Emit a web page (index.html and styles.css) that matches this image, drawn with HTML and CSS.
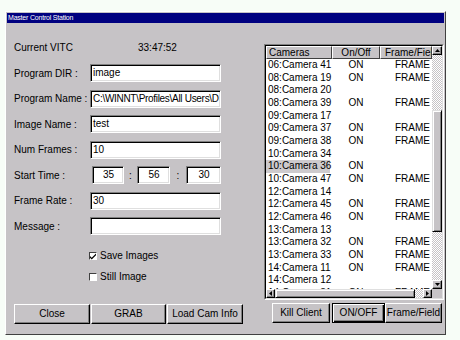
FILE: index.html
```html
<!DOCTYPE html>
<html>
<head>
<meta charset="utf-8">
<link rel="stylesheet" href="styles.css">
</head>
<body>
<div class="window">
  <div class="titlebar">Master Control Station</div>
  <div class="client">
    <div class="left">
      <div class="vitc"><span class="vitc-label">Current VITC</span><span>33:47:52</span></div>
      <div class="form">
        <span class="lbl">Program DIR :</span><div class="field">image</div>
        <span class="lbl">Program Name :</span><div class="field tight">C:\WINNT\Profiles\All Users\D</div>
        <span class="lbl">Image Name :</span><div class="field">test</div>
        <span class="lbl">Num Frames :</span><div class="field">10</div>
        <span class="lbl">Start Time :</span>
        <div class="time">
          <div class="field center t1">35</div><span class="colon">:</span>
          <div class="field center t2">56</div><span class="colon">:</span>
          <div class="field center t3">30</div>
        </div>
        <span class="lbl">Frame Rate :</span><div class="field">30</div>
        <span class="lbl">Message :</span><div class="field"></div>
      </div>
      <div class="checks">
        <div class="check"><span class="box"><svg width="7" height="7" viewBox="0 0 7 7"><path d="M0 3 L2 5 L7 0 L7 2 L2 7 L0 5 Z" fill="#000"/></svg></span>Save Images</div>
        <div class="check"><span class="box"></span>Still Image</div>
      </div>
      <div class="btnrow left-btns">
        <div class="btn b-close">Close</div>
        <div class="btn b-grab">GRAB</div>
        <div class="btn b-load">Load Cam Info</div>
      </div>
    </div>
    <div class="right">
      <div class="list">
        <div class="list-inner">
          <div class="list-main">
            <div class="list-head"><div class="hc c1">Cameras</div><div class="hc c2">On/Off</div><div class="hc c3">Frame/Field</div></div>
            <div class="row"><span class="c1">06:Camera 41</span><span class="c2">ON</span><span class="c3">FRAME</span></div>
            <div class="row"><span class="c1">08:Camera 19</span><span class="c2">ON</span><span class="c3">FRAME</span></div>
            <div class="row"><span class="c1">08:Camera 20</span><span class="c2"></span><span class="c3"></span></div>
            <div class="row"><span class="c1">08:Camera 39</span><span class="c2">ON</span><span class="c3">FRAME</span></div>
            <div class="row"><span class="c1">09:Camera 17</span><span class="c2"></span><span class="c3"></span></div>
            <div class="row"><span class="c1">09:Camera 37</span><span class="c2">ON</span><span class="c3">FRAME</span></div>
            <div class="row"><span class="c1">09:Camera 38</span><span class="c2">ON</span><span class="c3">FRAME</span></div>
            <div class="row"><span class="c1">10:Camera 34</span><span class="c2"></span><span class="c3"></span></div>
            <div class="row sel"><span class="c1">10:Camera 36</span><span class="c2">ON</span><span class="c3"></span></div>
            <div class="row"><span class="c1">10:Camera 47</span><span class="c2">ON</span><span class="c3">FRAME</span></div>
            <div class="row"><span class="c1">12:Camera 14</span><span class="c2"></span><span class="c3"></span></div>
            <div class="row"><span class="c1">12:Camera 45</span><span class="c2">ON</span><span class="c3">FRAME</span></div>
            <div class="row"><span class="c1">12:Camera 46</span><span class="c2">ON</span><span class="c3">FRAME</span></div>
            <div class="row"><span class="c1">13:Camera 13</span><span class="c2"></span><span class="c3"></span></div>
            <div class="row"><span class="c1">13:Camera 32</span><span class="c2">ON</span><span class="c3">FRAME</span></div>
            <div class="row"><span class="c1">13:Camera 33</span><span class="c2">ON</span><span class="c3">FRAME</span></div>
            <div class="row"><span class="c1">14:Camera 11</span><span class="c2">ON</span><span class="c3">FRAME</span></div>
            <div class="row"><span class="c1">14:Camera 12</span><span class="c2"></span><span class="c3"></span></div>
            <div class="row"><span class="c1">14:Camera 31</span><span class="c2">ON</span><span class="c3">FRAME</span></div>
          </div>
          <div class="vscroll">
            <div class="arrow v-arrow"><svg width="5" height="3" viewBox="0 0 5 3"><path d="M2.5 0 L5 3 L0 3 Z" fill="#000"/></svg></div>
            <div class="track vt-top"></div>
            <div class="thumb v-thumb"></div>
            <div class="track vt-bot"></div>
            <div class="arrow v-arrow"><svg width="5" height="3" viewBox="0 0 5 3"><path d="M0 0 L5 0 L2.5 3 Z" fill="#000"/></svg></div>
          </div>
          <div class="hscroll">
            <div class="arrow h-arrow"><svg width="3" height="5" viewBox="0 0 3 5"><path d="M0 2.5 L3 0 L3 5 Z" fill="#000"/></svg></div>
            <div class="thumb h-thumb"></div>
            <div class="track ht"></div>
            <div class="arrow h-arrow"><svg width="3" height="5" viewBox="0 0 3 5"><path d="M0 0 L3 2.5 L0 5 Z" fill="#000"/></svg></div>
          </div>
          <div class="corner"></div>
        </div>
      </div>
      <div class="btnrow right-btns">
        <div class="btn b-kill">Kill Client</div>
        <div class="btn b-onoff default">ON/OFF</div>
        <div class="btn b-ff">Frame/Field</div>
      </div>
    </div>
  </div>
</div>
</body>
</html>
```
FILE: styles.css
```css
* { box-sizing: border-box; }
html, body { margin: 0; padding: 0; }
body {
  background: #f7fdf7;
  font-family: "Liberation Sans", Arial, sans-serif;
  font-size: 10px;
  color: #000;
  width: 460px;
  height: 340px;
  overflow: hidden;
}
.window {
  margin: 11px 0 0 5px;
  width: 441px;
  height: 324px;
  background: #c6c3c6;
  border: 1px solid;
  border-color: #ffffff #404040 #404040 #ffffff;
  padding: 1px;
  display: flex;
  flex-direction: column;
}
.titlebar {
  height: 10px;
  line-height: 10px;
  background: #000080;
  color: #fff;
  font-size: 7px;
  letter-spacing: -0.2px;
  padding-left: 1px;
  white-space: nowrap;
}
.client {
  flex: 1;
  display: flex;
}
.left {
  width: 257px;
  padding: 19px 0 9px 7px;
  display: flex;
  flex-direction: column;
}
.vitc {
  height: 12px;
  line-height: 12px;
  display: flex;
}
.vitc-label { width: 124px; }
.form {
  margin-top: 10px;
  display: grid;
  grid-template-columns: 76px 131px;
  grid-auto-rows: 18px;
  row-gap: 7.5px;
  align-items: center;
}
.lbl { white-space: nowrap; }
.field {
  height: 18px;
  background: #fff;
  border: 1px solid;
  border-color: #808080 #ffffff #ffffff #808080;
  box-shadow: inset 1px 1px 0 #000, inset -1px -1px 0 #dfdfdf;
  padding: 0 1px 0 2px;
  line-height: 16px;
  white-space: nowrap;
  overflow: hidden;
}
.field.tight { letter-spacing: -0.3px; }
.field.center { text-align: center; }
.time {
  display: flex;
  align-items: center;
  height: 18px;
}
.t1 { margin-left: 2px; width: 32px; }
.t2 { width: 33px; }
.t3 { width: 35px; }
.colon { width: 13px; text-align: center; }
.time .colon:nth-of-type(2) { width: 16px; }
.checks {
  margin-top: 15px;
  margin-left: 75px;
  display: flex;
  flex-direction: column;
  gap: 9px;
}
.check {
  height: 12px;
  line-height: 12px;
  display: flex;
  align-items: center;
}
.box {
  width: 8px;
  height: 8px;
  background: #fff;
  border: 1px solid;
  border-color: #404040 #ffffff #ffffff #404040;
  margin-right: 3px;
  display: flex;
  align-items: center;
  justify-content: center;
}
.box svg { display: block; }
.btnrow {
  display: flex;
  height: 20px;
}
.left-btns { margin-top: auto; gap: 1px; }
.btn {
  height: 20px;
  line-height: 18px;
  text-align: center;
  border: 1px solid;
  border-color: #ffffff #000000 #000000 #ffffff;
  box-shadow: inset -1px -1px 0 #808080;
  white-space: nowrap;
  overflow: hidden;
}
.btn.default {
  border-color: #000;
  box-shadow: inset 1px 1px 0 #fff, inset -1px -1px 0 #000, inset -2px -2px 0 #808080;
}
.b-close { width: 76px; }
.b-grab { width: 75px; }
.b-load { width: 76px; }
.right {
  width: 180px;
  padding-top: 21px;
  display: flex;
  flex-direction: column;
}
.list {
  height: 256px;
  border: 1px solid;
  border-color: #808080 #ffffff #ffffff #808080;
}
.list-inner {
  height: 100%;
  border: 1px solid;
  border-color: #000 #dfdfdf #dfdfdf #000;
  display: grid;
  grid-template-columns: 1fr 10px;
  grid-template-rows: 1fr 9px;
  background: #fff;
}
.list-main {
  overflow: hidden;
  min-height: 0;
}
.list-head {
  display: flex;
  height: 13px;
  line-height: 11px;
}
.hc {
  background: #c6c3c6;
  border: 1px solid;
  border-color: #ffffff #404040 #404040 #ffffff;
  white-space: nowrap;
  overflow: hidden;
}
.list-head .c1 { width: 66px; padding-left: 2px; }
.list-head .c2 { width: 48px; text-align: center; }
.list-head .c3 { width: 52px; padding-left: 4px; }
.row {
  display: flex;
  height: 12.67px;
  line-height: 12.67px;
  white-space: nowrap;
}
.row .c1 { width: 64px; padding-left: 2px; margin-right: 2px; }
.row .c2 { width: 48px; text-align: center; }
.row .c3 { padding-left: 15px; }
.row.sel .c1 { background: #cdcacd; }
.vscroll {
  display: flex;
  flex-direction: column;
}
.hscroll {
  display: flex;
}
.corner { background: #c6c3c6; }
.arrow {
  background: #c6c3c6;
  border: 1px solid;
  border-color: #ffffff #000 #000 #ffffff;
  box-shadow: inset -1px -1px 0 #808080;
  display: flex;
  align-items: center;
  justify-content: center;
}
.arrow svg { display: block; }
.v-arrow { height: 9px; }
.h-arrow { width: 9px; }
.track {
  background: repeating-conic-gradient(#c6c3c6 0 25%, #ffffff 0 50%) 0 0 / 2px 2px;
}
.vt-top { height: 55px; }
.vt-bot { flex: 1; }
.thumb {
  background: #c6c3c6;
  border: 1px solid;
  border-color: #dfdfdf #000 #000 #dfdfdf;
  box-shadow: inset 1px 1px 0 #fff, inset -1px -1px 0 #808080;
}
.v-thumb { height: 122px; }
.h-thumb { width: 140px; }
.ht { flex: 1; }
.right-btns { margin-top: 3px; padding-left: 8px; }
.b-kill { width: 58px; margin-right: 2px; }
.b-onoff { width: 53px; }
.b-ff { width: 57px; }
```
